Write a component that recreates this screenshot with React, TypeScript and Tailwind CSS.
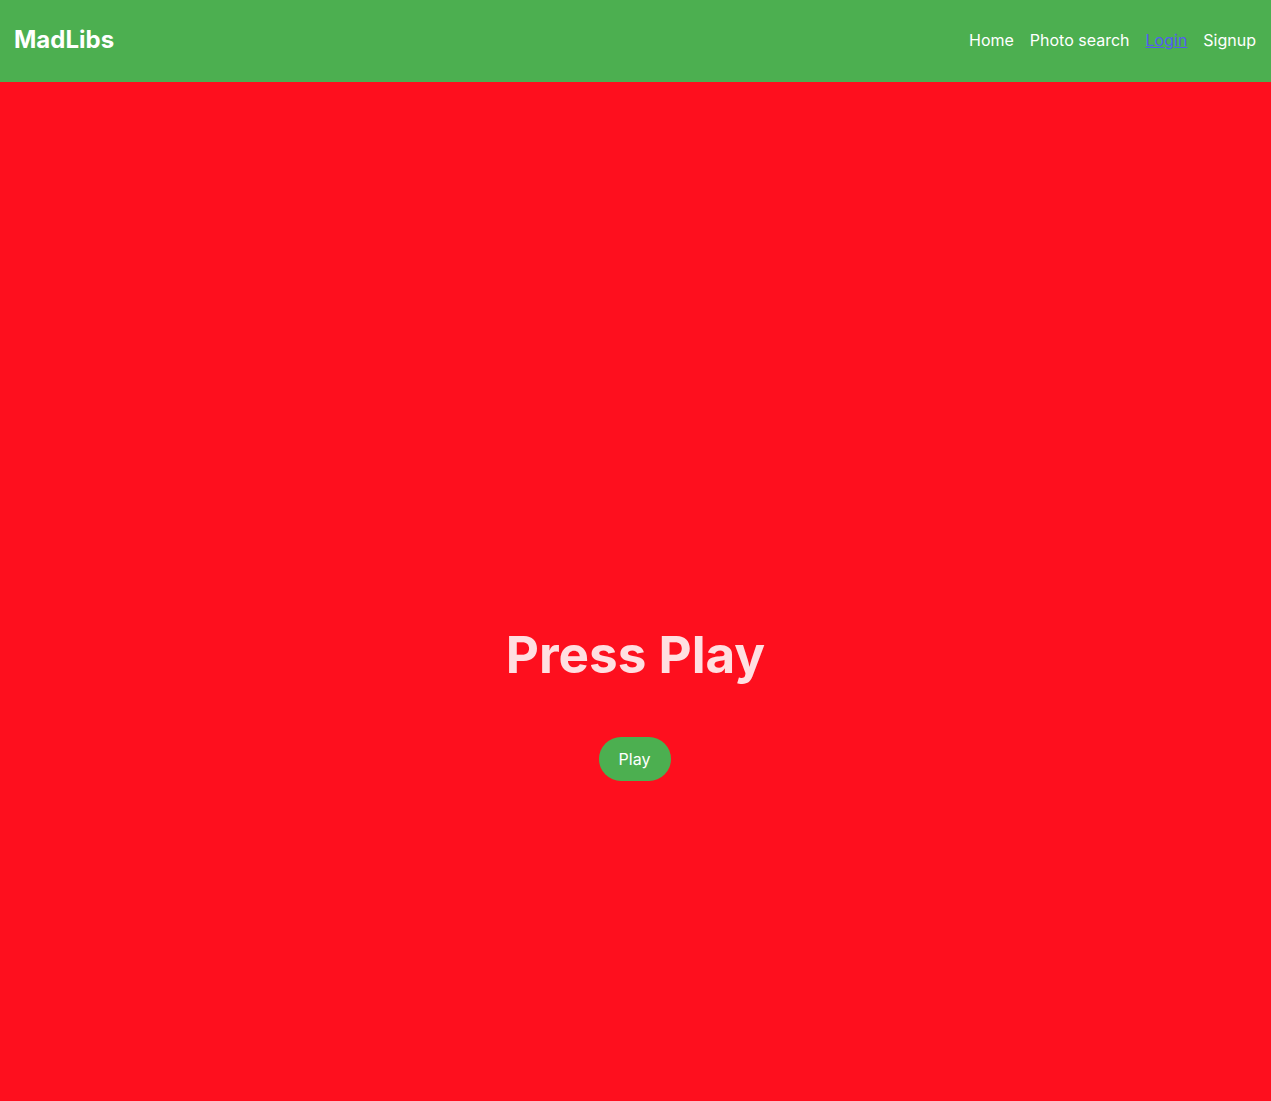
import React from 'react';

const links = ['Home', 'Photo search', 'Login', 'Signup'];

const App = () => {
  return (
    <div className="min-h-screen flex flex-col bg-[#fe0f1e] font-['Inter',sans-serif]">
      <header className="h-[82px] bg-[#4caf50] flex items-center justify-between pl-[14px] pr-[15px] pb-[2px]">
        <h1 className="text-[24px] font-bold text-white">MadLibs</h1>
        <nav className="flex items-center gap-4 text-[16px] font-normal">
          {links.map((l) => (
            <a
              key={l}
              href="#"
              className={l === 'Login' ? 'text-[#535bf2] underline' : 'text-white'}
            >
              {l}
            </a>
          ))}
        </nav>
      </header>

      <main className="flex-1 flex flex-col items-center pt-[544px] pb-10">
        <h2 className="text-[51.2px] leading-[1.1] font-bold text-white/[0.87]">Press Play</h2>
        <button className="mt-[55px] mr-[2px] h-[44px] w-[72px] rounded-full bg-[#4caf50] text-white text-[16px] font-normal">
          Play
        </button>
      </main>
    </div>
  );
};

export default App;
